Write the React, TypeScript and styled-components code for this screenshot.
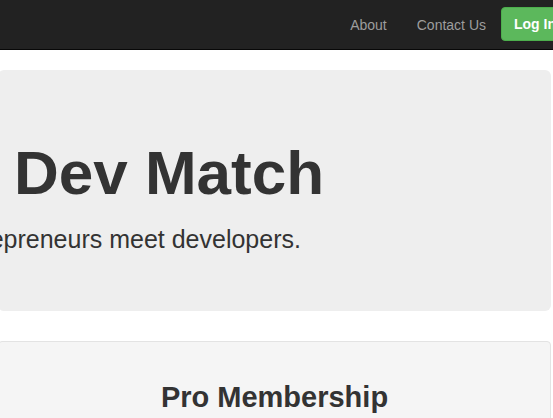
import React from "react";
import styled, { createGlobalStyle } from "styled-components";

const GlobalStyle = createGlobalStyle`
  html, body {
    margin: 0;
    padding: 0;
    background: #ffffff;
    overflow: hidden;
  }
  body {
    font-family: "Liberation Sans", Helvetica, Arial, sans-serif;
    font-size: 14px;
    line-height: 1.42857;
    color: #333333;
  }
  * { box-sizing: border-box; }
`;

const Navbar = styled.nav`
  height: 50px;
  background: #222222;
  border-bottom: 1px solid #080808;
  margin-bottom: 20px;
`;

const NavInner = styled.div`
  display: flex;
  justify-content: flex-end;
  align-items: flex-start;
  margin-right: -16px;
`;

const NavLink = styled.a`
  display: block;
  padding: 15px 15px;
  line-height: 20px;
  font-size: 14px;
  color: #9d9d9d;
  text-decoration: none;
`;

const LoginButton = styled.a`
  display: block;
  margin-top: 7px;
  padding: 6px 12px;
  line-height: 20px;
  font-size: 14px;
  font-weight: bold;
  color: #ffffff;
  background: #5cb85c;
  border: 1px solid #4cae4c;
  border-radius: 4px;
  text-decoration: none;
  white-space: nowrap;
`;

const Container = styled.main`
  width: 553px;
  margin-left: -2px;
`;

const Jumbotron = styled.section`
  background: #eeeeee;
  border-radius: 6px;
  padding: 48px 16px;
  margin-bottom: 30px;
  overflow: hidden;
`;

const Title = styled.h1`
  margin: 20px 0 15px;
  font-size: 62px;
  line-height: 69px;
  font-weight: bold;
  color: #333333;
  white-space: nowrap;
`;

const Lead = styled.p<{ $shift: number }>`
  margin: 0 0 7px ${(p) => p.$shift}px;
  font-size: 25px;
  line-height: 34px;
  color: #333333;
  white-space: nowrap;
`;

const Well = styled.section`
  background: #f5f5f5;
  border: 1px solid #e3e3e3;
  border-radius: 4px;
  padding: 19px;
  min-height: 120px;
  text-align: center;
`;

const PlanTitle = styled.h2`
  margin: 20px 0 10px;
  font-size: 29px;
  line-height: 33px;
  font-weight: bold;
  color: #333333;
`;

export default function App() {
  return (
    <>
      <GlobalStyle />
      <Navbar>
        <NavInner>
          <NavLink href="#">About</NavLink>
          <NavLink href="#">Contact Us</NavLink>
          <LoginButton href="#">Log In</LoginButton>
        </NavInner>
      </Navbar>
      <Container>
        <Jumbotron>
          <Title>Dev Match</Title>
          <Lead $shift={-148}>Where entrepreneurs meet developers.</Lead>
        </Jumbotron>
        <Well>
          <PlanTitle>Pro Membership</PlanTitle>
        </Well>
      </Container>
    </>
  );
}
